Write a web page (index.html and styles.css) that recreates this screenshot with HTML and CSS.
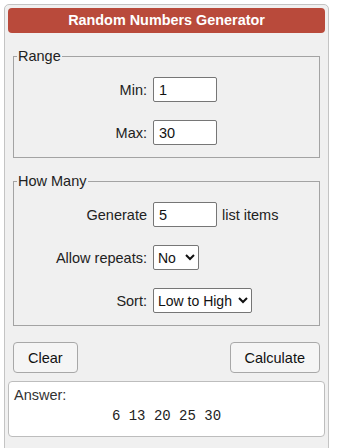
FILE: index.html
```html
<!DOCTYPE html>
<html>
<head>
<meta charset="utf-8">
<link rel="stylesheet" href="styles.css">
</head>
<body>
<div class="calc">
  <div class="title">Random Numbers Generator</div>
  <fieldset class="group">
    <legend>Range</legend>
    <div class="rows">
      <div class="row"><label class="lbl">Min:</label><input class="num" type="text" value="1"></div>
      <div class="row"><label class="lbl">Max:</label><input class="num" type="text" value="30"></div>
    </div>
  </fieldset>
  <fieldset class="group">
    <legend>How Many</legend>
    <div class="rows">
      <div class="row"><label class="lbl">Generate</label><input class="num" type="text" value="5"><span class="after">list items</span></div>
      <div class="row"><label class="lbl">Allow repeats:</label><select class="sel sel-no"><option>No</option><option>Yes</option></select></div>
      <div class="row"><label class="lbl">Sort:</label><select class="sel sel-sort"><option>Low to High</option><option>High to Low</option><option>None</option></select></div>
    </div>
  </fieldset>
  <div class="actions">
    <button class="btn">Clear</button>
    <button class="btn">Calculate</button>
  </div>
  <div class="answer">
    <div class="answer-label">Answer:</div>
    <div class="answer-value">6 13 20 25 30</div>
  </div>
</div>
</body>
</html>
```
FILE: styles.css
```css
html, body {
  margin: 0;
  background: #ffffff;
}
body {
  padding: 4px;
  font-family: "Liberation Sans", Arial, sans-serif;
  font-size: 14.5px;
  color: #222;
}
.calc {
  width: 317px;
  min-height: 460px;
  padding: 3px;
  border: 1px solid #c4c4c4;
  border-radius: 5px;
  background: #f0f0f0;
}
.title {
  height: 25px;
  line-height: 25px;
  background: #b94a3b;
  border-radius: 4px;
  color: #fff;
  font-weight: bold;
  font-size: 14.4px;
  text-align: center;
}
.group {
  margin: 15px 5px 0;
  border: 1px solid #a3a3a3;
  padding: 13px 0 12px 3px;
  min-width: 0;
}
.group legend {
  padding: 0 1px;
  font-size: 14.5px;
  color: #222;
}
.rows {
  display: flex;
  flex-direction: column;
  gap: 18px;
}
.row {
  display: flex;
  align-items: center;
  height: 25px;
}
.lbl {
  width: 130px;
  text-align: right;
  margin-right: 6px;
}
.num {
  box-sizing: border-box;
  width: 64px;
  height: 25px;
  padding: 0 5px;
  border: 1px solid #767676;
  border-radius: 2px;
  font-family: "Liberation Sans", Arial, sans-serif;
  font-size: 14.5px;
  color: #111;
  background: #fff;
}
.after {
  margin-left: 5px;
}
.sel {
  box-sizing: border-box;
  height: 25px;
  border: 1px solid #767676;
  border-radius: 2px;
  font-family: "Liberation Sans", Arial, sans-serif;
  font-size: 14px;
  color: #111;
  background: #fff;
  padding: 0;
}
.sel-no { width: 46px; }
.sel-sort { width: 99px; }
.actions {
  display: flex;
  justify-content: space-between;
  margin: 16px 5px 0;
}
.btn {
  height: 31px;
  padding: 0 14px;
  border: 1px solid #a8a8a8;
  border-radius: 4px;
  background: #f5f5f5;
  font-family: "Liberation Sans", Arial, sans-serif;
  font-size: 14.5px;
  color: #111;
}
.answer {
  margin-top: 8px;
  background: #fff;
  border: 1px solid #bdbdbd;
  border-radius: 4px;
  padding: 5px 5px 12px;
}
.answer-label {
  line-height: 16px;
  color: #333;
}
.answer-value {
  margin-top: 5px;
  line-height: 16px;
  text-align: center;
  font-family: "Liberation Mono", "Courier New", monospace;
  font-size: 14px;
  color: #222;
}
```
